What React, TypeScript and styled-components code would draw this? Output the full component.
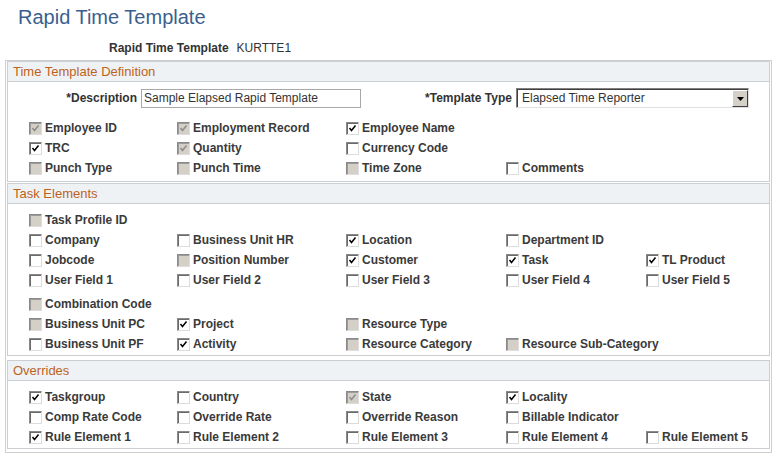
import styled, { createGlobalStyle } from 'styled-components';

type State = 'on' | 'off' | 'disOn' | 'disOff';
type Cell = [string, State] | null;

const GlobalStyle = createGlobalStyle`
  body {
    margin: 0;
    background: #fff;
    font-family: "Liberation Sans", Arial, sans-serif;
  }
`;

const Page = styled.div`
  padding: 0 5px;
`;

const Title = styled.h1`
  margin: 0;
  padding: 5px 0 0 13px;
  height: 35px;
  box-sizing: border-box;
  font-size: 20px;
  line-height: 24px;
  font-weight: normal;
  color: #3a5f8f;
`;

const KeyRow = styled.div`
  display: flex;
  gap: 8px;
  padding-left: 104px;
  height: 25px;
  align-items: center;
  font-size: 12px;
  color: #333;
`;

const KeyLabel = styled.span`
  font-weight: bold;
`;

const Outer = styled.div`
  border: 1px solid #cfcfcf;
  padding: 0 1px 3px 1px;
`;

const Section = styled.div<{ $gap?: number }>`
  border: 1px solid #cbcfd3;
  margin-top: ${(p) => p.$gap ?? 0}px;
`;

const SectionHeader = styled.div`
  height: 19px;
  line-height: 19px;
  padding-left: 5px;
  background: #eef2f4;
  border-bottom: 1px solid #cbcfd3;
  font-size: 13px;
  color: #bd621c;
`;

const SectionBody = styled.div<{ $top: number; $bottom: number }>`
  padding: ${(p) => p.$top}px 0 ${(p) => p.$bottom}px 21px;
`;

const FieldRow = styled.div`
  display: flex;
  align-items: center;
  height: 22px;
  margin: 0 0 9px -21px;
`;

const FieldLabel = styled.label<{ $w: number }>`
  width: ${(p) => p.$w}px;
  text-align: right;
  font-size: 12px;
  font-weight: bold;
  color: #333;
  margin-right: 4px;
`;

const TextBox = styled.div`
  width: 220px;
  height: 19px;
  box-sizing: border-box;
  border: 1px solid #a8a8a8;
  padding-left: 2px;
  font-size: 12px;
  line-height: 17px;
  color: #333;
`;

const Select = styled.div`
  display: flex;
  width: 233px;
  height: 20px;
  box-sizing: border-box;
  border: 1px solid;
  border-color: #808080 #e0e0e0 #e0e0e0 #808080;
  box-shadow: inset 1px 1px 0 #404040;
  background: #fff;
`;

const SelectText = styled.span`
  flex: 1;
  padding: 0 0 0 5px;
  font-size: 12px;
  line-height: 18px;
  color: #333;
`;

const DropButton = styled.span`
  width: 16px;
  height: 17px;
  margin-top: 1px;
  box-sizing: border-box;
  background: #d4d0c8;
  border: 1px solid;
  border-color: #fff #404040 #404040 #fff;
  display: flex;
  align-items: center;
  justify-content: center;
`;

const Grid = styled.div<{ $extra?: number }>`
  display: grid;
  grid-template-columns: 148px 169px 160px 140px 1fr;
  grid-auto-rows: 20px;
  margin-top: ${(p) => p.$extra ?? 0}px;
`;

const Item = styled.div`
  display: flex;
  align-items: center;
  gap: 3px;
  font-size: 12px;
  font-weight: bold;
  color: #3a3a3a;
  white-space: nowrap;
`;

const Box = styled.span<{ $disabled: boolean }>`
  flex-shrink: 0;
  width: 13px;
  height: 13px;
  box-sizing: border-box;
  border: 1px solid;
  border-color: #8a8a8a #dcdcdc #dcdcdc #8a8a8a;
  box-shadow: inset 1px 1px 0 ${(p) => (p.$disabled ? '#9a9a9a' : '#6a6a6a')};
  background: ${(p) => (p.$disabled ? '#d4d0c8' : '#fff')};
  display: flex;
  align-items: center;
  justify-content: center;
`;

function Check({ state }: { state: State }) {
  const disabled = state === 'disOn' || state === 'disOff';
  const checked = state === 'on' || state === 'disOn';
  return (
    <Box $disabled={disabled}>
      {checked && (
        <svg width="9" height="9" viewBox="0 0 9 9">
          <polyline
            points="1.5,4 3.5,6.5 7.5,1.5"
            fill="none"
            stroke={disabled ? '#8c8c8c' : '#000'}
            strokeWidth="1.5"
          />
        </svg>
      )}
    </Box>
  );
}

function Rows({ rows, extra }: { rows: Cell[][]; extra?: number }) {
  return (
    <Grid $extra={extra}>
      {rows.flatMap((row, r) =>
        [0, 1, 2, 3, 4].map((c) => {
          const cell = row[c];
          return cell ? (
            <Item key={`${r}-${c}`}>
              <Check state={cell[1]} />
              {cell[0]}
            </Item>
          ) : (
            <span key={`${r}-${c}`} />
          );
        })
      )}
    </Grid>
  );
}

const definition: Cell[][] = [
  [['Employee ID', 'disOn'], ['Employment Record', 'disOn'], ['Employee Name', 'on']],
  [['TRC', 'on'], ['Quantity', 'disOn'], ['Currency Code', 'off']],
  [['Punch Type', 'disOff'], ['Punch Time', 'disOff'], ['Time Zone', 'disOff'], ['Comments', 'off']],
];

const taskTop: Cell[][] = [
  [['Task Profile ID', 'disOff']],
  [['Company', 'off'], ['Business Unit HR', 'off'], ['Location', 'on'], ['Department ID', 'off']],
  [['Jobcode', 'off'], ['Position Number', 'disOff'], ['Customer', 'on'], ['Task', 'on'], ['TL Product', 'on']],
  [['User Field 1', 'off'], ['User Field 2', 'off'], ['User Field 3', 'off'], ['User Field 4', 'off'], ['User Field 5', 'off']],
];

const taskBottom: Cell[][] = [
  [['Combination Code', 'disOff']],
  [['Business Unit PC', 'disOff'], ['Project', 'on'], ['Resource Type', 'disOff']],
  [['Business Unit PF', 'off'], ['Activity', 'on'], ['Resource Category', 'disOff'], ['Resource Sub-Category', 'disOff']],
];

const overrides: Cell[][] = [
  [['Taskgroup', 'on'], ['Country', 'off'], ['State', 'disOn'], ['Locality', 'on']],
  [['Comp Rate Code', 'off'], ['Override Rate', 'off'], ['Override Reason', 'off'], ['Billable Indicator', 'off']],
  [['Rule Element 1', 'on'], ['Rule Element 2', 'off'], ['Rule Element 3', 'off'], ['Rule Element 4', 'off'], ['Rule Element 5', 'off']],
];

export default function App() {
  return (
    <Page>
      <GlobalStyle />
      <Title>Rapid Time Template</Title>
      <KeyRow>
        <KeyLabel>Rapid Time Template</KeyLabel>
        <span>KURTTE1</span>
      </KeyRow>
      <Outer>
        <Section>
          <SectionHeader>Time Template Definition</SectionHeader>
          <SectionBody $top={5} $bottom={3}>
            <FieldRow>
              <FieldLabel $w={129}>*Description</FieldLabel>
              <TextBox>Sample Elapsed Rapid Template</TextBox>
              <FieldLabel $w={151}>*Template Type</FieldLabel>
              <Select>
                <SelectText>Elapsed Time Reporter</SelectText>
                <DropButton>
                  <svg width="7" height="4" viewBox="0 0 7 4">
                    <polygon points="0,0 7,0 3.5,4" fill="#000" />
                  </svg>
                </DropButton>
              </Select>
            </FieldRow>
            <Rows rows={definition} />
          </SectionBody>
        </Section>
        <Section $gap={1}>
          <SectionHeader>Task Elements</SectionHeader>
          <SectionBody $top={6} $bottom={1}>
            <Rows rows={taskTop} />
            <Rows rows={taskBottom} extra={4} />
          </SectionBody>
        </Section>
        <Section $gap={4}>
          <SectionHeader>Overrides</SectionHeader>
          <SectionBody $top={6} $bottom={1}>
            <Rows rows={overrides} />
          </SectionBody>
        </Section>
      </Outer>
    </Page>
  );
}
